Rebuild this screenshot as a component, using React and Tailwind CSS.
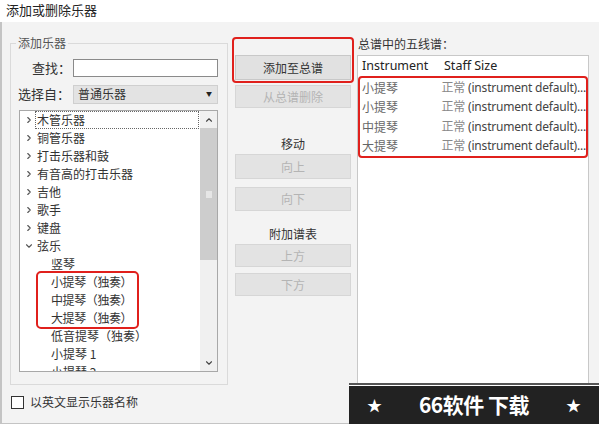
import React from "react";
import { ChevronRight, ChevronDown, ChevronUp } from "lucide-react";

const CJK = "font-['Noto_Sans_CJK_SC',sans-serif]";

function TreeRow({ label, expanded, focus }) {
  return (
    <div className="h-[18px] flex items-center">
      <div className="w-[15px] pl-[4px] flex items-center text-[#555]">
        {expanded ? (
          <ChevronDown size={10} strokeWidth={2.6} />
        ) : (
          <ChevronRight size={10} strokeWidth={2.6} />
        )}
      </div>
      <div
        className={
          "h-[18px] flex-1 flex items-center pl-[1px] text-[12px] text-[#333] " +
          (focus ? "border border-dotted border-[#666] mr-[1px]" : "border border-transparent")
        }
      >
        {label}
      </div>
    </div>
  );
}

function ChildRow({ label }) {
  return (
    <div className="h-[18px] flex items-center pl-[31px] text-[12px] text-[#333] whitespace-nowrap">
      {label}
    </div>
  );
}

function Btn({ children, disabled, h = "h-[24px]" }) {
  return (
    <div
      className={
        h +
        " flex items-center justify-center text-[12px] border " +
        (disabled
          ? "bg-[#e3e3e3] border-[#d6d6d6] text-[#b4b4b4]"
          : "bg-[#e1e1e1] border-[#c8c8c8] text-[#333]")
      }
    >
      {children}
    </div>
  );
}

export default function App() {
  const cats = ["木管乐器", "铜管乐器", "打击乐器和鼓", "有音高的打击乐器", "吉他", "歌手", "键盘"];
  const rows = [
    ["小提琴", "正常"],
    ["小提琴", "正常"],
    ["中提琴", "正常"],
    ["大提琴", "正常"],
  ];
  return (
    <div className={"w-[599px] h-[424px] relative overflow-hidden bg-[#f3f3f3] " + CJK}>
      <div className="h-[22px] bg-white pl-[6px] text-[13px] leading-[20px] text-[#222]">
        添加或删除乐器
      </div>
      <div className="flex h-[402px] border-l-2 border-b border-[#c4c4c4]">
        {/* Left column */}
        <div className="ml-[8px] w-[218px] flex flex-col">
          <fieldset className="mt-[13px] h-[350px] border border-[#dadada] pl-[7px] pr-[9px]">
            <legend className="px-[2px] ml-[-2px] text-[12px] leading-[16px] text-[#555]">添加乐器</legend>
            <div className="mt-[8px] flex items-center h-[18px]">
              <div className="w-[55px] text-right text-[13px] text-[#333] pr-[2px]">查找：</div>
              <div className="flex-1 h-[18px] bg-white border border-[#8a8a8a]" />
            </div>
            <div className="mt-[8px] flex items-center h-[18px]">
              <div className="w-[55px] text-[13px] text-[#333]">选择自：</div>
              <div className="flex-1 h-[19px] bg-[#e3e3e3] border border-[#cfcfcf] flex items-center justify-between pl-[4px] pr-[5px] text-[12px] text-[#333]">
                <span>普通乐器</span>
                <span className="text-[6px] leading-none text-[#222]">▼</span>
              </div>
            </div>
            <div className="mt-[7px] ml-[1px] h-[262px] border border-[#a8a8a8] bg-white flex overflow-hidden">
              <div className="flex-1 overflow-hidden">
                {cats.map((c, i) => (
                  <TreeRow key={c} label={c} focus={i === 0} />
                ))}
                <TreeRow label="弦乐" expanded />
                <ChildRow label="竖琴" />
                <div className="ml-[18px] w-[99px] outline-2 outline-[#e0201c] rounded-[3px]">
                  {["小提琴（独奏）", "中提琴（独奏）", "大提琴（独奏）"].map((l) => (
                    <div key={l} className="h-[18px] flex items-center pl-[13px] text-[12px] text-[#333] whitespace-nowrap tracking-[-0.4px]">
                      {l}
                    </div>
                  ))}
                </div>
                <ChildRow label="低音提琴（独奏）" />
                <ChildRow label="小提琴 1" />
                <ChildRow label="小提琴 2" />
              </div>
              <div className="w-[17px] bg-[#f0f0f0] flex flex-col">
                <div className="h-[17px] flex items-center justify-center text-[#444]">
                  <ChevronUp size={10} strokeWidth={2.6} />
                </div>
                <div className="h-[132px] bg-[#cdcdcd] flex items-center justify-center">
                  <div className="w-[6px] h-[7px] bg-[#e6e6e6]" />
                </div>
                <div className="flex-1" />
                <div className="h-[17px] flex items-center justify-center text-[#444]">
                  <ChevronDown size={10} strokeWidth={2.6} />
                </div>
              </div>
            </div>
          </fieldset>
          <div className="mt-[10px] flex items-center h-[14px]">
            <div className="ml-[1px] w-[13px] h-[13px] border border-[#333] bg-white" />
            <span className="ml-[6px] text-[12px] text-[#333]">以英文显示乐器名称</span>
          </div>
        </div>

        {/* Middle column */}
        <div className="ml-[6px] w-[118px] flex flex-col">
          <div className="mt-[17px] h-[42px] outline-2 outline-[#e0201c] rounded-[2px] pt-[16px] px-[1px]">
            <Btn h="h-[25px]">添加至总谱</Btn>
          </div>
          <div className="mt-[4px] px-[1px]">
            <Btn disabled h="h-[23px]">从总谱删除</Btn>
          </div>
          <div className="mt-[28px] h-[16px] leading-[16px] text-center text-[12px] text-[#333]">移动</div>
          <div className="mt-[2px] px-[1px]">
            <Btn disabled h="h-[25px]">向上</Btn>
          </div>
          <div className="mt-[8px] px-[1px]">
            <Btn disabled h="h-[24px]">向下</Btn>
          </div>
          <div className="mt-[17px] h-[12px] leading-[12px] text-center text-[12px] text-[#333]">附加谱表</div>
          <div className="mt-[4px] px-[1px]">
            <Btn disabled h="h-[23px]">上方</Btn>
          </div>
          <div className="mt-[6px] px-[1px]">
            <Btn disabled h="h-[23px]">下方</Btn>
          </div>
        </div>

        {/* Right column */}
        <div className="ml-[5px] w-[232px] flex flex-col">
          <div className="mt-[14px] h-[16px] leading-[16px] text-[12px] text-[#333] pl-[1px]">总谱中的五线谱：</div>
          <div className="mt-[3px] flex-1 bg-white border border-[#c8c8c8]">
            <div className="h-[21px] flex items-center text-[12.5px] text-[#222] font-['Noto_Sans','Noto_Sans_CJK_SC',sans-serif]">
              <div className="w-[86px] pl-[4px]">Instrument</div>
              <div>Staff Size</div>
            </div>
            <div className="mt-[1px] mx-[2px] outline-2 outline-[#e0201c] rounded-[2px]">
              {rows.map(([n, s], i) => (
                <div key={i} className="h-[19.5px] flex items-center text-[12px] whitespace-nowrap">
                  <div className="w-[86px] pl-[2px] text-[#666]">{n}</div>
                  <div className="text-[#444] font-['Noto_Sans','Noto_Sans_CJK_SC',sans-serif] tracking-[-0.2px]">
                    <span className="text-[#888]">{s}</span> (instrument default)...
                  </div>
                </div>
              ))}
            </div>
          </div>
        </div>
      </div>

      {/* watermark banner */}
      <div className="absolute left-[349px] top-[383px] w-[250px] h-[41px] border-t-[2px] border-[#555] bg-white pt-[1px]">
        <div className="h-full bg-[#222] flex items-center justify-between px-[18px] text-white">
          <span className="text-[15px]">★</span>
          <span className="text-[21px] font-bold font-['Noto_Sans_CJK_SC',serif] tracking-[-0.5px]">66软件 下载</span>
          <span className="text-[15px]">★</span>
        </div>
      </div>
    </div>
  );
}
